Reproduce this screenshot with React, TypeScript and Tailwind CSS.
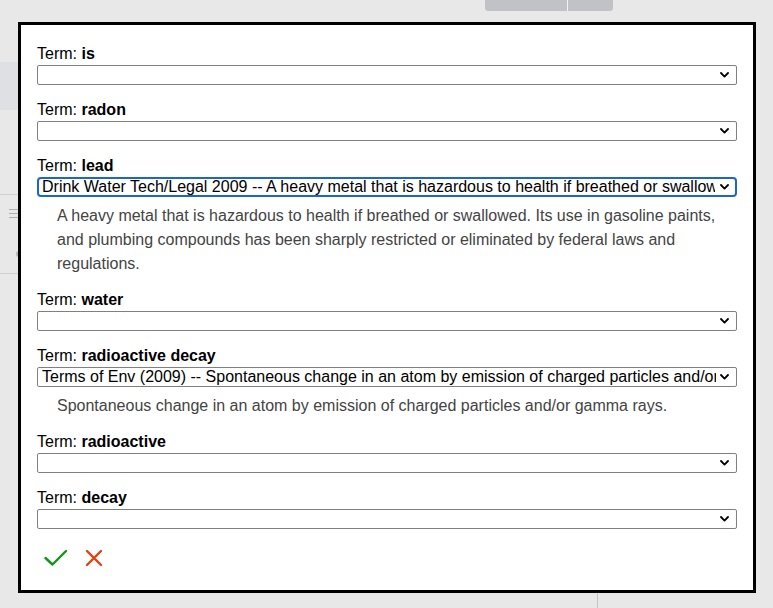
import React from "react";

type Row = { term: string; value?: string; desc?: string; focused?: boolean };

const rows: Row[] = [
  { term: "is" },
  { term: "radon" },
  {
    term: "lead",
    value:
      "Drink Water Tech/Legal 2009 -- A heavy metal that is hazardous to health if breathed or swallowed.",
    desc:
      "A heavy metal that is hazardous to health if breathed or swallowed. Its use in gasoline paints, and plumbing compounds has been sharply restricted or eliminated by federal laws and regulations.",
    focused: true,
  },
  { term: "water" },
  {
    term: "radioactive decay",
    value:
      "Terms of Env (2009) -- Spontaneous change in an atom by emission of charged particles and/or gamma rays.",
    desc: "Spontaneous change in an atom by emission of charged particles and/or gamma rays.",
  },
  { term: "radioactive" },
  { term: "decay" },
];

function Chevron() {
  return (
    <svg
      width="9"
      height="6"
      viewBox="0 0 9 6"
      className="pointer-events-none absolute right-[8px] top-1/2 -translate-y-1/2"
    >
      <path d="M1 1 L4.5 4.6 L8 1" fill="none" stroke="#000" strokeWidth="1.8" strokeLinecap="round" strokeLinejoin="round" />
    </svg>
  );
}

function TermRow({ row }: { row: Row }) {
  return (
    <div className="flex flex-col">
      <div className="h-[22px] leading-[25px] text-[16px] text-black">
        Term: <span className="font-bold">{row.term}</span>
      </div>
      <div className="relative mt-[2px] h-[20px]">
        <select
          defaultValue={row.value ?? ""}
          className={
            row.focused
              ? "block h-[20px] w-full appearance-none overflow-hidden rounded-[4px] border-2 border-[#1b64d8] bg-white py-0 pl-[3px] pr-[20px] text-[16px] leading-[16px] text-black outline-none"
              : "block h-[20px] w-full appearance-none overflow-hidden rounded-[2px] border border-[#808080] bg-white py-0 pl-[4px] pr-[20px] text-[16px] leading-[18px] text-black outline-none"
          }
        >
          <option value="">{""}</option>
          {row.value && <option value={row.value}>{row.value}</option>}
        </select>
        <Chevron />
      </div>
      {row.desc && (
        <p className="mt-[7px] -mb-[1px] pl-[20px] pr-[8px] text-[16px] leading-[24px] text-[#444]">
          {row.desc}
        </p>
      )}
    </div>
  );
}

export default function App() {
  return (
    <div
      className="relative h-[608px] w-[773px] overflow-hidden bg-[#e8e8e8] pl-[18px] pt-[22px]"
      style={{ fontFamily: '"Liberation Sans", Arial, Helvetica, sans-serif' }}
    >
      {/* background page bits (under the dialog) */}
      <div className="absolute left-[485px] top-0 flex h-[11px] w-[128px] overflow-hidden rounded-b-[3px]">
        <div className="h-full w-[82px] bg-[#c1c2c7]" />
        <div className="h-full w-[1px] bg-[#f2f2f2]" />
        <div className="h-full flex-1 bg-[#c1c2c7]" />
      </div>
      <div className="absolute left-0 top-[62px] h-[48px] w-[19px] bg-[#dfe0e4]" />
      <div className="absolute left-0 top-[194px] h-[1px] w-[18px] bg-[#cfcfcf]" />
      <div className="absolute left-[9px] top-[209px] flex flex-col gap-[3px]">
        <div className="h-[1px] w-[9px] bg-[#b0b0b0]" />
        <div className="h-[1px] w-[9px] bg-[#b0b0b0]" />
        <div className="h-[1px] w-[9px] bg-[#b0b0b0]" />
      </div>
      <div className="absolute left-[16px] top-[251px] h-[6px] w-[3px] rounded-l-full bg-[#b8b8b8]" />
      <div className="absolute left-0 top-[273px] h-[1px] w-[18px] bg-[#cfcfcf]" />
      <div className="absolute left-[597px] top-[593px] h-[15px] w-[1px] bg-[#c4c4c4]" />

      {/* dialog */}
      <div className="relative flex h-[571px] w-[738px] flex-col gap-[12px] border-[3px] border-black bg-white px-[16px] pt-[16px]">
        {rows.map((r) => (
          <TermRow key={r.term} row={r} />
        ))}
        <div className="mt-[5px] flex items-center gap-[16px] pl-[7px]">
          <button className="flex h-[24px] w-[24px] items-center justify-center" aria-label="OK">
            <svg width="24" height="18" viewBox="0 0 24 18">
              <path d="M1.5 9 L8.5 15.5 L22 2" fill="none" stroke="#14941a" strokeWidth="2.4" strokeLinecap="round" strokeLinejoin="round" />
            </svg>
          </button>
          <button className="flex h-[24px] w-[20px] items-center justify-center" aria-label="Cancel">
            <svg width="18" height="18" viewBox="0 0 18 18">
              <path d="M2 2 L16 16 M16 2 L2 16" fill="none" stroke="#e5410f" strokeWidth="2.4" strokeLinecap="round" />
            </svg>
          </button>
        </div>
      </div>
    </div>
  );
}
